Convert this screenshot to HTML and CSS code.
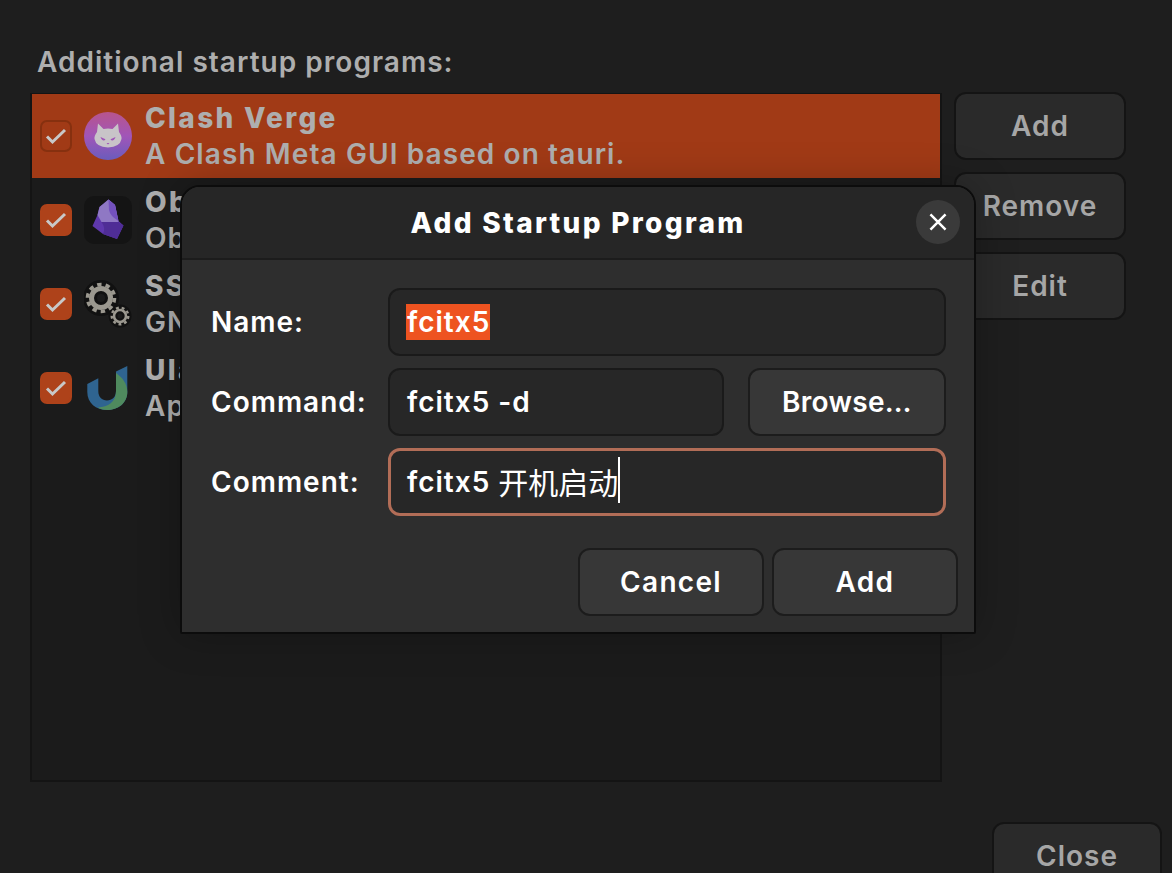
FILE: index.html
```html
<!DOCTYPE html>
<html lang="en">
<head>
<meta charset="utf-8">
<title>Startup Applications</title>
<link rel="stylesheet" href="styles.css">
</head>
<body>
<div class="page">
  <div class="heading">Additional startup programs:</div>
  <div class="main">
    <div class="list">
      <div class="row selected">
        <span class="check"><svg class="tick" viewBox="0 0 28 28"><path d="M5 14.500l5.500 5.500L23 8"/></svg></span>
        <svg class="icon" viewBox="0 0 48 48">
          <defs><linearGradient id="cat" x1="0" y1="0" x2="0" y2="1"><stop offset="0" stop-color="#b7558c"/><stop offset=".5" stop-color="#a155b8"/><stop offset="1" stop-color="#6a5cbc"/></linearGradient></defs>
          <circle cx="24" cy="24" r="24" fill="url(#cat)"/>
          <path d="M14 11.500L19.500 17Q24 16 28.500 17L34 11.500L35 20Q38 24 37.500 27Q36 35 24 35.500Q12 35 10.500 27Q10 24 13 20Z" fill="#c8c4c8"/>
          <path d="M16.500 25l5 2.200c-1 2-4 1.600-5-2.200zM31.500 25l-5 2.200c1 2 4 1.600 5-2.200zM22.500 31h3l-1.500 1.500z" fill="#a155b8"/>
        </svg>
        <div class="texts"><div class="title">Clash Verge</div><div class="sub">A Clash Meta GUI based on tauri.</div></div>
      </div>
      <div class="row">
        <span class="check on"><svg class="tick" viewBox="0 0 28 28"><path d="M5 14.500l5.500 5.500L23 8"/></svg></span>
        <svg class="icon" viewBox="0 0 48 48">
          <rect width="48" height="48" rx="10" fill="#141414"/>
          <path d="M24.500 3.500L31 9L34.500 25L39.500 29.500L33 43L19 38L8.500 30L13.500 19L15.500 11Z" fill="#5f38ad"/>
          <path d="M24.500 3.500L15.500 11L13.500 19L17.500 26L34.500 26L31 9Z" fill="#8f78c4"/>
          <path d="M24.500 3.500L31 9L34.500 25Q26 20 25 14Z" fill="#7351bd"/>
          <path d="M17.500 26L34.500 26L39.500 29.500L33 43L19 38Q22 32 17.500 26Z" fill="#4f2d96"/>
        </svg>
        <div class="texts"><div class="title">Obsidian</div><div class="sub">Obsidian</div></div>
      </div>
      <div class="row">
        <span class="check on"><svg class="tick" viewBox="0 0 28 28"><path d="M5 14.500l5.500 5.500L23 8"/></svg></span>
        <svg class="icon" viewBox="0 0 48 48">
          <g fill="none">
            <circle cx="17" cy="18" r="11" stroke="#111" stroke-width="14"/>
            <circle cx="36" cy="36" r="7" stroke="#111" stroke-width="9"/>
            <circle cx="17" cy="18" r="13.500" stroke="#9b988f" stroke-width="3.600" stroke-dasharray="4.400 4.080"/>
            <circle cx="17" cy="18" r="9.500" stroke="#9b988f" stroke-width="5"/>
            <circle cx="36" cy="36" r="8.300" stroke="#9b988f" stroke-width="2.400" stroke-dasharray="2.900 2.890"/>
            <circle cx="36" cy="36" r="6" stroke="#9b988f" stroke-width="2.600"/>
          </g>
        </svg>
        <div class="texts"><div class="title">SSH Key Agent</div><div class="sub">GNOME Keyring: SSH Agent</div></div>
      </div>
      <div class="row">
        <span class="check on"><svg class="tick" viewBox="0 0 28 28"><path d="M5 14.500l5.500 5.500L23 8"/></svg></span>
        <svg class="icon" viewBox="0 0 48 48">
          <path d="M3.300 20L14.300 14.300V27C14.300 33 18 36.500 23 36.500C28 36.500 32 33 32 27V7.600L43.300 2V28C43.300 39 34 46 23 46C12 46 3.300 39 3.300 28Z" fill="#2f6490"/>
          <path d="M32 9C39 14 43.300 20 43.300 28C43.300 39 34 46 23 46C19 46 16 45 14 43.500C24 43 32 38 32 27Z" fill="#4f8a5e"/>
        </svg>
        <div class="texts"><div class="title">Ulauncher</div><div class="sub">Application launcher for Linux</div></div>
      </div>
    </div>
    <div class="side">
      <button class="btn">Add</button>
      <button class="btn">Remove</button>
      <button class="btn">Edit</button>
    </div>
  </div>
  <div class="foot"><button class="btn close">Close</button></div>

  <div class="dialog">
    <div class="dialog-head">
      <span class="dialog-title">Add Startup Program</span>
      <span class="x"><svg viewBox="0 0 16 16"><path d="M2.500 2.500l11 11M13.500 2.500l-11 11"/></svg></span>
    </div>
    <div class="dialog-body">
      <div class="form">
        <label class="lbl">Name:</label>
        <div class="input wide"><span class="sel">fcitx5</span></div>
        <label class="lbl">Command:</label>
        <div class="cmd">
          <div class="input grow">fcitx5 -d</div>
          <button class="btn2 browse">Browse…</button>
        </div>
        <label class="lbl">Comment:</label>
        <div class="input wide focus">fcitx5 <span class="cjk">开机启动</span><span class="caret"></span></div>
      </div>
      <div class="actions">
        <button class="btn2 act">Cancel</button>
        <button class="btn2 act">Add</button>
      </div>
    </div>
  </div>
</div>
</body>
</html>
```

FILE: styles.css
```css
* { box-sizing: border-box; }
html, body { margin: 0; padding: 0; background: #1e1e1e; }
body { font-family: Inter, "Noto Sans CJK SC", sans-serif; font-weight: 600; font-size: 28px; letter-spacing: 1px; }
.page { position: relative; width: 1172px; height: 873px; overflow: hidden; background: #1e1e1e; color: #aeaeae; padding: 45px 0 0 30px; }
.heading { padding-left: 7px; height: 48px; line-height: 34px; letter-spacing: 1.030px; }
.main { display: flex; gap: 12px; }
.list { width: 912px; height: 689px; background: #1b1b1b; border: 2px solid #141414; border-width: 1px 2px 2px 2px; }
.row { display: flex; align-items: center; height: 84px; padding-left: 8px; }
.row.selected { background: #a13a16; }
.check { flex: none; width: 32px; height: 32px; border-radius: 7px; border: 2px solid #86300f; background: #a13a16; display: flex; }
.check.on { background: #ae421a; border-color: #ae421a; }
.tick { width: 28px; height: 28px; fill: none; stroke: #c8c8c8; stroke-width: 3; }
.icon { flex: none; width: 48px; height: 48px; margin-left: 12px; }
.texts { margin-left: 13px; }
.title { font-weight: 800; line-height: 36px; letter-spacing: 2.300px; }
.sub { line-height: 36px; letter-spacing: 1.100px; }
.side { display: flex; flex-direction: column; gap: 12px; margin-top: -1px; }
.btn { width: 172px; height: 68px; background: #2a2a2a; border: 2px solid #141414; border-radius: 12px; color: #a6a6a6; font: inherit; letter-spacing: inherit; padding: 0; }
.foot { display: flex; justify-content: flex-end; padding: 40px 10px 0 0; }
.close { width: 170px; }
.dialog { position: absolute; left: 180px; top: 185px; width: 796px; height: 449px; background: #2e2e2e; border: 2px solid #0c0c0c; border-radius: 20px 20px 2px 2px; box-shadow: 0 0 40px rgba(0,0,0,.25); color: #fff; overflow: hidden; }
.dialog-head { position: relative; height: 73px; background: #262626; border-bottom: 2px solid #1c1c1c; display: flex; align-items: center; justify-content: center; }
.dialog-title { font-weight: 800; letter-spacing: 2.300px; }
.x { position: absolute; right: 14px; top: 13px; width: 44px; height: 44px; border-radius: 50%; background: #3a3a3a; display: flex; align-items: center; justify-content: center; }
.x svg { width: 22px; height: 22px; fill: none; stroke: #fff; stroke-width: 1.800; }
.dialog-body { padding: 28px 16px 0 29px; }
.form { display: grid; grid-template-columns: 177px 558px; row-gap: 12px; align-items: center; }
.input { height: 68px; background: #272727; border: 2px solid #1a1a1a; border-radius: 12px; padding-left: 17px; display: flex; align-items: center; white-space: pre; }
.sel { background: #ee5320; height: 36px; line-height: 36px; margin-left: -1px; padding-left: 1px; }
.focus { border: 3px solid #b26d57; padding-left: 16px; }
.cjk { font-family: "Noto Sans CJK SC", sans-serif; font-size: 30px; font-weight: 400; letter-spacing: 0; padding-bottom: 3px; }
.caret { width: 2px; height: 46px; background: #fff; margin-bottom: 4px; }
.cmd { display: flex; gap: 24px; }
.grow { flex: none; width: 336px; }
.btn2 { height: 68px; background: #373737; border: 2px solid #1c1c1c; border-radius: 12px; color: #fff; font: inherit; letter-spacing: 1.300px; padding: 0; }
.browse { width: 198px; letter-spacing: 0.300px; }
.actions { display: flex; justify-content: flex-end; gap: 8px; margin-top: 32px; }
.act { width: 186px; }
```
